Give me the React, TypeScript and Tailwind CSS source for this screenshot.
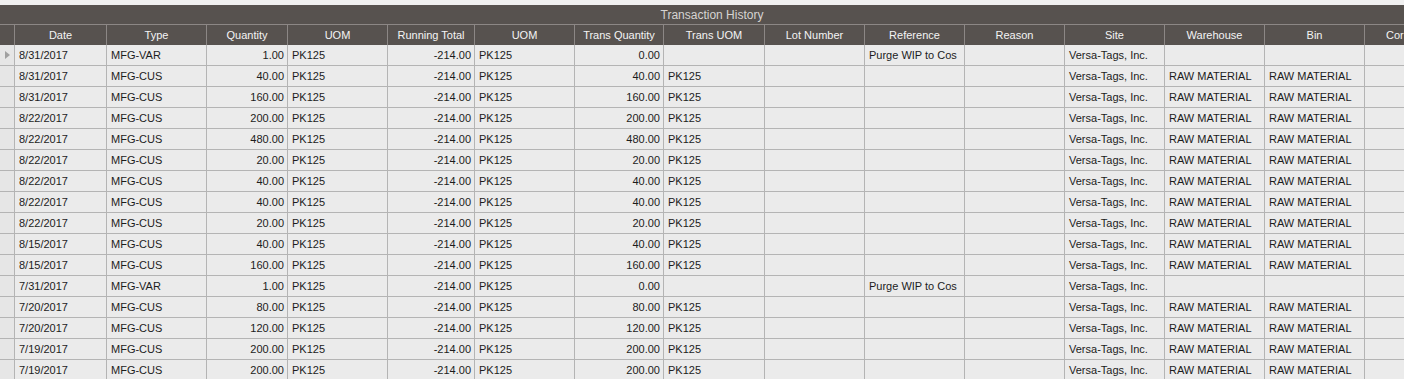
import React from "react";

const cols = [
  { label: "Date", key: "date", align: "left" },
  { label: "Type", key: "type", align: "left" },
  { label: "Quantity", key: "qty", align: "right" },
  { label: "UOM", key: "uom", align: "left" },
  { label: "Running Total", key: "total", align: "right" },
  { label: "UOM", key: "uom2", align: "left" },
  { label: "Trans Quantity", key: "tqty", align: "right" },
  { label: "Trans UOM", key: "tuom", align: "left" },
  { label: "Lot Number", key: "lot", align: "left" },
  { label: "Reference", key: "ref", align: "left" },
  { label: "Reason", key: "reason", align: "left" },
  { label: "Site", key: "site", align: "left" },
  { label: "Warehouse", key: "wh", align: "left" },
  { label: "Bin", key: "bin", align: "left" },
  { label: "Cor", key: "cor", align: "left" },
] as const;

type Row = Record<string, string>;

const mk = (date: string, type: string, qty: string): Row => {
  const v = type === "MFG-VAR";
  return {
    date,
    type,
    qty,
    uom: "PK125",
    total: "-214.00",
    uom2: "PK125",
    tqty: v ? "0.00" : qty,
    tuom: v ? "" : "PK125",
    lot: "",
    ref: v ? "Purge WIP to Cos" : "",
    reason: "",
    site: "Versa-Tags, Inc.",
    wh: v ? "" : "RAW MATERIAL",
    bin: v ? "" : "RAW MATERIAL",
    cor: "",
  };
};

const rows: Row[] = [
  mk("8/31/2017", "MFG-VAR", "1.00"),
  mk("8/31/2017", "MFG-CUS", "40.00"),
  mk("8/31/2017", "MFG-CUS", "160.00"),
  mk("8/22/2017", "MFG-CUS", "200.00"),
  mk("8/22/2017", "MFG-CUS", "480.00"),
  mk("8/22/2017", "MFG-CUS", "20.00"),
  mk("8/22/2017", "MFG-CUS", "40.00"),
  mk("8/22/2017", "MFG-CUS", "40.00"),
  mk("8/22/2017", "MFG-CUS", "20.00"),
  mk("8/15/2017", "MFG-CUS", "40.00"),
  mk("8/15/2017", "MFG-CUS", "160.00"),
  mk("7/31/2017", "MFG-VAR", "1.00"),
  mk("7/20/2017", "MFG-CUS", "80.00"),
  mk("7/20/2017", "MFG-CUS", "120.00"),
  mk("7/19/2017", "MFG-CUS", "200.00"),
  mk("7/19/2017", "MFG-CUS", "200.00"),
];

// indicator column + 15 data columns, widths include the right border
const grid =
  "grid w-max grid-cols-[15px_92px_100px_81px_100px_87px_100px_89px_101px_100px_100px_100px_100px_100px_100px_100px]";

export default function App() {
  return (
    <div
      className="w-[1404px] h-[379px] overflow-hidden bg-[#f0f0f0] pt-[5px] text-[11px] leading-none"
      style={{ fontFamily: '"Liberation Sans", Arial, sans-serif' }}
    >
      <div className="h-[20px] bg-[#57524f] border-b border-[#8c8785] flex items-center justify-center pl-[20px] text-[12px] text-[#d6d4d2]">
        Transaction History
      </div>
      <div className={`${grid} h-[20px] bg-[#57524f] text-[#f4f4f4]`}>
        {[{ label: "" }, ...cols].map((c, i) => (
          <div
            key={i}
            className={`border-r border-[#8c8785] flex items-center whitespace-nowrap overflow-hidden ${
              i === cols.length ? "justify-start pl-[21px]" : "justify-center"
            }`}
          >
            {c.label}
          </div>
        ))}
      </div>
      {rows.map((r, ri) => (
        <div key={ri} className={`${grid} h-[21px] bg-[#ebebeb] text-[#1c1c1c]`}>
          <div className="border-r border-b border-[#b4b4b4] bg-[#e6e6e6] flex items-center justify-center">
            {ri === 0 && (
              <svg width="5" height="8" viewBox="0 0 5 8">
                <path d="M0 0 L5 4 L0 8 Z" fill="#a0a0a0" />
              </svg>
            )}
          </div>
          {cols.map((c) => (
            <div
              key={c.key}
              className={`border-r border-b border-[#b4b4b4] flex items-center whitespace-nowrap overflow-hidden ${
                c.align === "right" ? "justify-end pr-[3px]" : "pl-[4px]"
              }`}
            >
              {r[c.key]}
            </div>
          ))}
        </div>
      ))}
    </div>
  );
}
